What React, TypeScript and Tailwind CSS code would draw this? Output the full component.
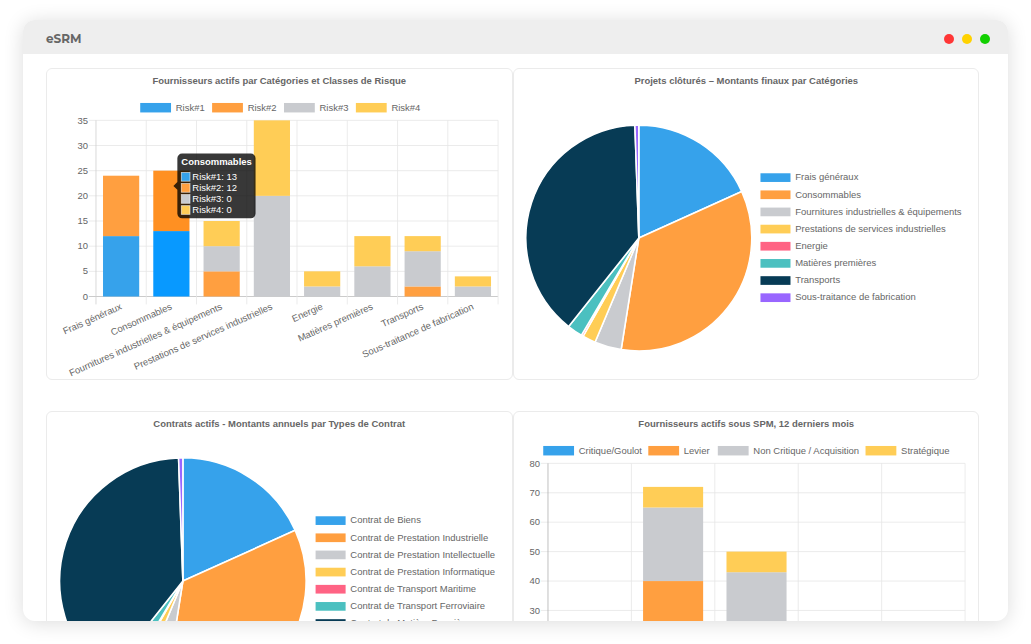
import React from 'react';

const COLORS = {
  blue: '#36a2eb',
  orange: '#ff9f40',
  grey: '#c9cbcf',
  yellow: '#ffcd56',
  pink: '#ff6384',
  teal: '#4bc0c0',
  navy: '#073b55',
  purple: '#9966ff',
};

// Hovered bars get a more saturated fill
const HOVER: Record<string, string> = {
  [COLORS.blue]: '#0899ff',
  [COLORS.orange]: '#ff9022',
};

type LegendItem = { label: string; color: string; x: number };
type Bar = { label: string; values: [string, number][]; active?: boolean };
type Slice = { color: string; to: number };

const PALETTE = Object.values(COLORS);

const riskLegend: LegendItem[] = [
  { label: 'Risk#1', color: COLORS.blue, x: 118 },
  { label: 'Risk#2', color: COLORS.orange, x: 209 },
  { label: 'Risk#3', color: COLORS.grey, x: 300 },
  { label: 'Risk#4', color: COLORS.yellow, x: 391 },
];

const riskBars: Bar[] = [
  { label: 'Frais généraux', values: [[COLORS.blue, 12], [COLORS.orange, 12]] },
  { label: 'Consommables', values: [[COLORS.blue, 13], [COLORS.orange, 12]], active: true },
  { label: 'Fournitures industrielles & équipements', values: [[COLORS.orange, 5], [COLORS.grey, 5], [COLORS.yellow, 5]] },
  { label: 'Prestations de services industrielles', values: [[COLORS.grey, 20], [COLORS.yellow, 15]] },
  { label: 'Energie', values: [[COLORS.grey, 2], [COLORS.yellow, 3]] },
  { label: 'Matières premières', values: [[COLORS.grey, 6], [COLORS.yellow, 6]] },
  { label: 'Transports', values: [[COLORS.orange, 2], [COLORS.grey, 7], [COLORS.yellow, 3]] },
  { label: 'Sous-traitance de fabrication', values: [[COLORS.grey, 2], [COLORS.yellow, 2]] },
];

const spmLegend: LegendItem[] = [
  { label: 'Critique/Goulot', color: COLORS.blue, x: 37 },
  { label: 'Levier', color: COLORS.orange, x: 170 },
  { label: 'Non Critique / Acquisition', color: COLORS.grey, x: 258 },
  { label: 'Stratégique', color: COLORS.yellow, x: 445 },
];

const spmBars: Bar[] = [
  { label: '', values: [] },
  { label: '', values: [[COLORS.orange, 40], [COLORS.grey, 25], [COLORS.yellow, 7]] },
  { label: '', values: [[COLORS.grey, 43], [COLORS.yellow, 7]] },
  { label: '', values: [] },
  { label: '', values: [] },
];

const categories = riskBars.map((b) => b.label);

const contracts = [
  'Contrat de Biens',
  'Contrat de Prestation Industrielle',
  'Contrat de Prestation Intellectuelle',
  'Contrat de Prestation Informatique',
  'Contrat de Transport Maritime',
  'Contrat de Transport Ferroviaire',
  'Contrat de Matière Première',
];

// Slice ends, in degrees clockwise from the top
const slices: Slice[] = [
  { color: COLORS.blue, to: 65.7 },
  { color: COLORS.orange, to: 189 },
  { color: COLORS.grey, to: 202.8 },
  { color: COLORS.yellow, to: 209.6 },
  { color: COLORS.pink, to: 210.6 },
  { color: COLORS.teal, to: 218.4 },
  { color: COLORS.navy, to: 358 },
  { color: COLORS.purple, to: 360 },
];

const Chart: React.FC<{ title: string; children: React.ReactNode }> = ({ title, children }) => (
  <figure className="rounded-md border border-[#ebebeb]">
    <svg viewBox="0 0 588 392" role="img" aria-label={title} className="block w-full fill-[#666] font-['Liberation_Sans',Arial,sans-serif] text-[12px]">
      <text x="294" y="19" textAnchor="middle" className="font-bold">{title}</text>
      {children}
    </svg>
  </figure>
);

const TopLegend: React.FC<{ items: LegendItem[] }> = ({ items }) => (
  <>
    {items.map((item) => (
      <g key={item.label}>
        <rect x={item.x} y="43" width="39" height="12" fill={item.color} />
        <text x={item.x + 45} y="53">{item.label}</text>
      </g>
    ))}
  </>
);

type BarChartProps = { bars: Bar[]; left: number; bottom: number; max: number; step: number; axisColor: string };

const BarChart: React.FC<BarChartProps> = ({ bars, left, bottom, max, step, axisColor }) => {
  const top = 65;
  const right = 571;
  const pitch = (right - left) / bars.length;
  const barWidth = pitch * 0.72;
  const yOf = (value: number) => bottom - (value / max) * (bottom - top);
  const ticks = Array.from({ length: max / step + 1 }, (_, i) => i * step);

  return (
    <>
      {ticks.map((tick) => (
        <g key={tick}>
          <line x1={left - 9} x2={right} y1={yOf(tick)} y2={yOf(tick)} stroke={tick === 0 ? '#bdbdbd' : '#e5e5e5'} />
          <text x={left - 10} y={yOf(tick) + 4} textAnchor="end">{tick}</text>
        </g>
      ))}
      {[...bars, null].map((_, i) => (
        <line key={i} x1={left + i * pitch} x2={left + i * pitch} y1={top} y2={bottom + 10} stroke={i === 0 ? axisColor : '#e5e5e5'} />
      ))}
      {bars.map((bar, i) => {
        let total = 0;
        const center = left + (i + 0.5) * pitch;
        return (
          <g key={i}>
            {bar.values.map(([color, value]) => {
              const y = yOf(total + value);
              const height = yOf(total) - y;
              total += value;
              return (
                <rect key={color} x={center - barWidth / 2} y={y} width={barWidth} height={height} fill={bar.active ? HOVER[color] : color} />
              );
            })}
            {bar.label && (
              <text transform={`translate(${center} ${bottom + 12}) rotate(-24)`} y="4" textAnchor="end">{bar.label}</text>
            )}
          </g>
        );
      })}
    </>
  );
};

const Tooltip: React.FC = () => (
  <g>
    <path d="M171 107H258a6 6 0 0 1 6 6V183a6 6 0 0 1 -6 6H171a6 6 0 0 1 -6 -6V153L160 148L165 143V113a6 6 0 0 1 6 -6Z" fill="#000" fillOpacity="0.78" />
    <text x="170" y="122" className="fill-white font-bold">Consommables</text>
    {[13, 12, 0, 0].map((value, i) => (
      <g key={i}>
        <rect x="170" y={131 + i * 14} width="11" height="11" fill={PALETTE[i]} stroke="#fff" strokeOpacity="0.7" />
        <text x="184" y={140 + i * 14} className="fill-white">{`Risk#${i + 1}: ${value}`}</text>
      </g>
    ))}
  </g>
);

type PieChartProps = { cx: number; cy: number; r: number; labels: string[]; legendX: number };

const PieChart: React.FC<PieChartProps> = ({ cx, cy, r, labels, legendX }) => {
  const point = (deg: number) => {
    const a = (deg * Math.PI) / 180;
    return `${cx + r * Math.sin(a)} ${cy - r * Math.cos(a)}`;
  };
  // Eight rows spread over the legend's height
  const rowY = (i: number) => 132 + (i * 152) / 7;

  return (
    <>
      {slices.map((slice, i) => {
        const from = i === 0 ? 0 : slices[i - 1].to;
        const large = slice.to - from > 180 ? 1 : 0;
        return (
          <path
            key={slice.color}
            d={`M${cx} ${cy}L${point(from)}A${r} ${r} 0 ${large} 1 ${point(slice.to)}Z`}
            fill={slice.color} stroke="#fff" strokeWidth="2" strokeLinejoin="bevel"
          />
        );
      })}
      {labels.map((label, i) => (
        <g key={label}>
          <rect x={legendX} y={rowY(i)} width="38" height="11" fill={PALETTE[i]} />
          <text x={legendX + 44} y={rowY(i) + 9}>{label}</text>
        </g>
      ))}
    </>
  );
};

export default function App() {
  return (
    <div className="flex h-screen flex-col bg-white px-[23px] pt-5 pb-[23px]">
      <div className="flex min-h-0 flex-1 flex-col overflow-hidden rounded-xl bg-white shadow-[0_2px_20px_rgba(0,0,0,0.14)]">
        <header className="flex h-[34px] shrink-0 items-center justify-between bg-[#eeeeee] pt-1 pr-[18px] pl-[23px]">
          <h1 className="font-['Montserrat','Inter',sans-serif] text-[12px] font-bold text-[#666]">eSRM</h1>
          <div className="flex gap-2">
            <button type="button" aria-label="Fermer" className="size-[10px] rounded-full bg-[#ff3636]" />
            <button type="button" aria-label="Réduire" className="size-[10px] rounded-full bg-[#ffd200]" />
            <button type="button" aria-label="Agrandir" className="size-[10px] rounded-full bg-[#12d000]" />
          </div>
        </header>

        <main className="min-h-0 flex-1 overflow-hidden pt-[14px] pr-[29px] pl-[23px]">
          <div className="grid grid-cols-2 gap-y-[31px]">
            <Chart title="Fournisseurs actifs par Catégories et Classes de Risque">
              <TopLegend items={riskLegend} />
              <BarChart bars={riskBars} left={62} bottom={288} max={35} step={5} axisColor="#cfcfcf" />
              <Tooltip />
            </Chart>
            <Chart title="Projets clôturés – Montants finaux par Catégories">
              <PieChart cx={158} cy={214} r={143} labels={categories} legendX={312} />
            </Chart>
            <Chart title="Contrats actifs - Montants annuels par Types de Contrat">
              <PieChart cx={172} cy={214} r={156} labels={contracts} legendX={340} />
            </Chart>
            <Chart title="Fournisseurs actifs sous SPM, 12 derniers mois">
              <TopLegend items={spmLegend} />
              <BarChart bars={spmBars} left={43} bottom={363} max={80} step={10} axisColor="#b0b0b0" />
            </Chart>
          </div>
        </main>
      </div>
    </div>
  );
}
